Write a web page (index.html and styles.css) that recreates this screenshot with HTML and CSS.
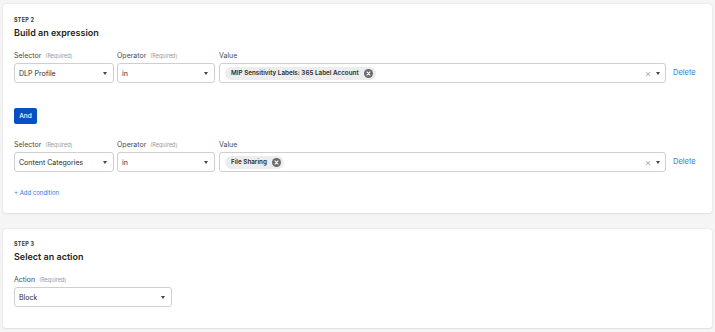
FILE: index.html
```html
<!DOCTYPE html>
<html>
<head>
<meta charset="utf-8">
<link rel="stylesheet" href="styles.css">
</head>
<body>
<div class="page">
  <section class="card card-expr">
    <div class="step">STEP 2</div>
    <h2 class="title">Build an expression</h2>

    <div class="cond cond-first">
      <div class="field f-sel">
        <div class="label">Selector <span class="req">(Required)</span></div>
        <div class="select"><span class="val">DLP Profile</span><span class="caret"></span></div>
      </div>
      <div class="field f-op">
        <div class="label">Operator <span class="req">(Required)</span></div>
        <div class="select"><span class="val">in</span><span class="caret"></span></div>
      </div>
      <div class="field f-val">
        <div class="label">Value</div>
        <div class="select multi">
          <span class="chip">MIP Sensitivity Labels: 365 Label Account<span class="chip-x"><svg viewBox="0 0 10 10" width="9" height="9"><circle cx="5" cy="5" r="5" fill="#6b6b6b"/><path d="M3.3 3.3l3.4 3.4M6.7 3.3l-3.4 3.4" stroke="#fff" stroke-width="1.2" stroke-linecap="round"/></svg></span></span>
          <span class="spacer"></span>
          <span class="clear">×</span><span class="caret"></span>
        </div>
      </div>
      <a class="delete">Delete</a>
    </div>

    <button class="and">And</button>

    <div class="cond">
      <div class="field f-sel">
        <div class="label">Selector <span class="req">(Required)</span></div>
        <div class="select"><span class="val">Content Categories</span><span class="caret"></span></div>
      </div>
      <div class="field f-op">
        <div class="label">Operator <span class="req">(Required)</span></div>
        <div class="select"><span class="val">in</span><span class="caret"></span></div>
      </div>
      <div class="field f-val">
        <div class="label">Value</div>
        <div class="select multi">
          <span class="chip">File Sharing<span class="chip-x"><svg viewBox="0 0 10 10" width="9" height="9"><circle cx="5" cy="5" r="5" fill="#6b6b6b"/><path d="M3.3 3.3l3.4 3.4M6.7 3.3l-3.4 3.4" stroke="#fff" stroke-width="1.2" stroke-linecap="round"/></svg></span></span>
          <span class="spacer"></span>
          <span class="clear">×</span><span class="caret"></span>
        </div>
      </div>
      <a class="delete">Delete</a>
    </div>

    <a class="add">+ Add condition</a>
  </section>

  <section class="card card-action">
    <div class="step">STEP 3</div>
    <h2 class="title">Select an action</h2>
    <div class="field f-action">
      <div class="label">Action <span class="req">(Required)</span></div>
      <div class="select"><span class="val">Block</span><span class="caret"></span></div>
    </div>
  </section>
</div>
</body>
</html>
```
FILE: styles.css
```css
* { box-sizing: border-box; }
html, body { margin: 0; padding: 0; }
body {
  background: #f5f5f5;
  font-family: Inter, "Noto Sans", sans-serif;
  color: #1f1f1f;
  width: 715px;
  height: 332px;
  overflow: hidden;
}
.page {
  padding: 4px 3px 0 3px;
  display: flex;
  flex-direction: column;
  gap: 16px;
}
.card {
  background: #fff;
  border-radius: 3px;
  box-shadow: 0 0 2px rgba(0,0,0,0.12), 0 1px 2px rgba(0,0,0,0.06);
  padding: 0 17px 0 11px;
}
.card-expr { height: 209px; padding-top: 12px; }
.card-action { height: 99px; padding-top: 11px; }
.step {
  font-size: 5.5px;
  font-weight: 700;
  letter-spacing: 0.2px;
  color: #36393a;
  line-height: 8px;
}
.title {
  margin: 2px 0 0 0;
  font-size: 9px;
  font-weight: 600;
  line-height: 13px;
  color: #1d1f20;
}
.cond {
  display: flex;
  align-items: flex-end;
  margin-top: 16px;
}
.cond-first { margin-top: 12px; }
.field { display: flex; flex-direction: column; }
.label {
  font-size: 7px;
  line-height: 10px;
  color: #4a4a4a;
  margin-bottom: 2px;
}
.req { font-size: 5.5px; color: #9a9a9a; margin-left: 2px; }
.f-sel { width: 100px; }
.f-op { width: 98px; margin-left: 3px; }
.f-val { flex: 1; margin-left: 4px; }
.f-action { width: 158px; margin-top: 12px; }
.select {
  height: 20px;
  border: 1px solid #cfcfcf;
  border-radius: 3px;
  display: flex;
  align-items: center;
  padding: 0 6px 0 4px;
  font-size: 7px;
  color: #2a2a2a;
}
.select .val { flex: 1; white-space: nowrap; }
.caret {
  width: 0; height: 0;
  border-left: 2.5px solid transparent;
  border-right: 2.5px solid transparent;
  border-top: 3px solid #444;
}
.multi { padding-left: 5px; padding-right: 5px; }
.chip {
  display: inline-flex;
  align-items: center;
  background: #ededed;
  border-radius: 7px;
  height: 13px;
  padding: 0 3px 0 6px;
  font-size: 6.3px;
  font-weight: 600;
  color: #2c2c2c;
  white-space: nowrap;
}
.chip-x { display: inline-flex; margin-left: 5px; }
.spacer { flex: 1; }
.clear { font-size: 9px; color: #a8a8a8; margin-right: 5px; line-height: 1; }
.delete {
  font-size: 7.5px;
  color: #2f7bd8;
  margin-left: 7px;
  width: 22px;
  height: 20px;
  line-height: 20px;
  white-space: nowrap;
}
.and {
  display: block;
  margin: 25px 0 0 0;
  width: 23px;
  height: 16px;
  padding: 0;
  border: none;
  border-radius: 2px;
  background: #0551c4;
  color: #fff;
  font-family: inherit;
  font-size: 6.5px;
  font-weight: 500;
}
.add {
  display: block;
  margin-top: 16px;
  font-size: 6px;
  line-height: 9px;
  color: #2f7bd8;
}
```
